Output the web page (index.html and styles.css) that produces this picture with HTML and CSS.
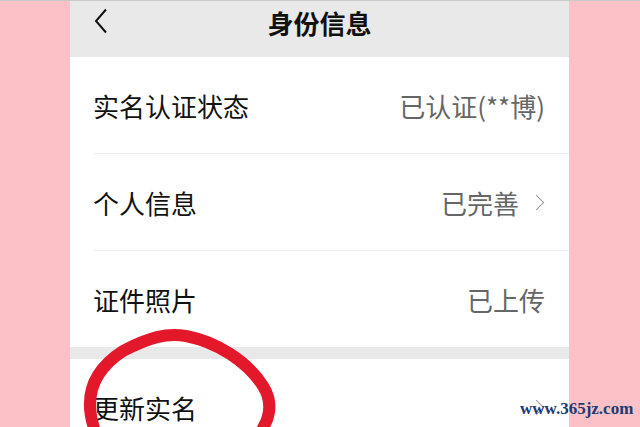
FILE: index.html
```html
<!DOCTYPE html>
<html lang="zh-CN">
<head>
    <meta charset="UTF-8">
    <meta name="viewport" content="width=device-width, initial-scale=1.0">
    <title>身份信息</title>
    <link rel="stylesheet" href="styles.css">
</head>
<body>
    <div class="phone">
        <div class="header">
            <svg class="back" width="14" height="26" viewBox="0 0 14 26">
                <path d="M12 1.5 L2 13 L12 24.5" fill="none" stroke="#111" stroke-width="2"/>
            </svg>
            <span class="title">身份信息</span>
        </div>
        <div class="list">
            <div class="row">
                <span class="label">实名认证状态</span>
                <span class="value">已认证(**博)</span>
            </div>
            <div class="row">
                <span class="label">个人信息</span>
                <span class="value">已完善 <i class="arrow"></i></span>
            </div>
            <div class="row">
                <span class="label">证件照片</span>
                <span class="value">已上传</span>
            </div>
        </div>
        <div class="gap"></div>
        <div class="list">
            <div class="row">
                <span class="label">更新实名</span>
                <span class="value"><i class="arrow"></i></span>
            </div>
        </div>
    </div>

    <!-- 手绘红圈 -->
    <svg class="circle" width="640" height="427" viewBox="0 0 640 427">
        <path d="M94 427 C84 396, 92 370, 123 350 C150 336, 166 332, 186 335 C217 341, 247 360, 263 385 C273 401, 270 415, 263 427"
              fill="none" stroke="#e3182b" stroke-width="12" stroke-linecap="round"/>
    </svg>

    <div class="watermark">www.365jz.com</div>
</body>
</html>
```

FILE: styles.css
```css
body {
    margin: 0;
    padding: 0;
    height: 427px;
    overflow: hidden;
    background-color: #fcc1c6;
    border-top: 1px solid #c9c9c9;
    box-sizing: border-box;
    font-family: "Noto Sans CJK SC", "Noto Sans", sans-serif;
    position: relative;
}
.phone {
    width: 499px;
    margin-left: 70px;
    height: 426px;
    background-color: #fff;
    overflow: hidden;
}
.header {
    height: 56px;
    background-color: #e9e9e9;
    display: flex;
    align-items: center;
    justify-content: center;
    position: relative;
}
.header .back {
    position: absolute;
    left: 24px;
    top: 7px;
}
.title {
    font-size: 26px;
    font-weight: 700;
    color: #111;
    margin-top: -14px;
}
.list {
    padding-left: 23px;
}
.row {
    height: 96px;
    display: flex;
    align-items: center;
    justify-content: space-between;
    padding-right: 24px;
    border-bottom: 1px solid #efefef;
}
.row:last-child {
    border-bottom: none;
}
.label {
    font-size: 26px;
    color: #111;
}
.value {
    font-size: 26px;
    color: #666;
    display: flex;
    align-items: center;
}
.arrow {
    display: inline-block;
    width: 10px;
    height: 10px;
    border-top: 1.6px solid #999;
    border-right: 1.6px solid #999;
    transform: rotate(45deg);
    margin-left: 12px;
    margin-right: 3px;
}
.gap {
    height: 12px;
    background-color: #e9e9e9;
}
.circle {
    position: absolute;
    left: 0;
    top: 0;
}
.watermark {
    position: absolute;
    left: 520px;
    top: 398px;
    font-family: "Liberation Serif", serif;
    font-size: 17px;
    font-weight: 700;
    color: #1d3a72;
}
```
